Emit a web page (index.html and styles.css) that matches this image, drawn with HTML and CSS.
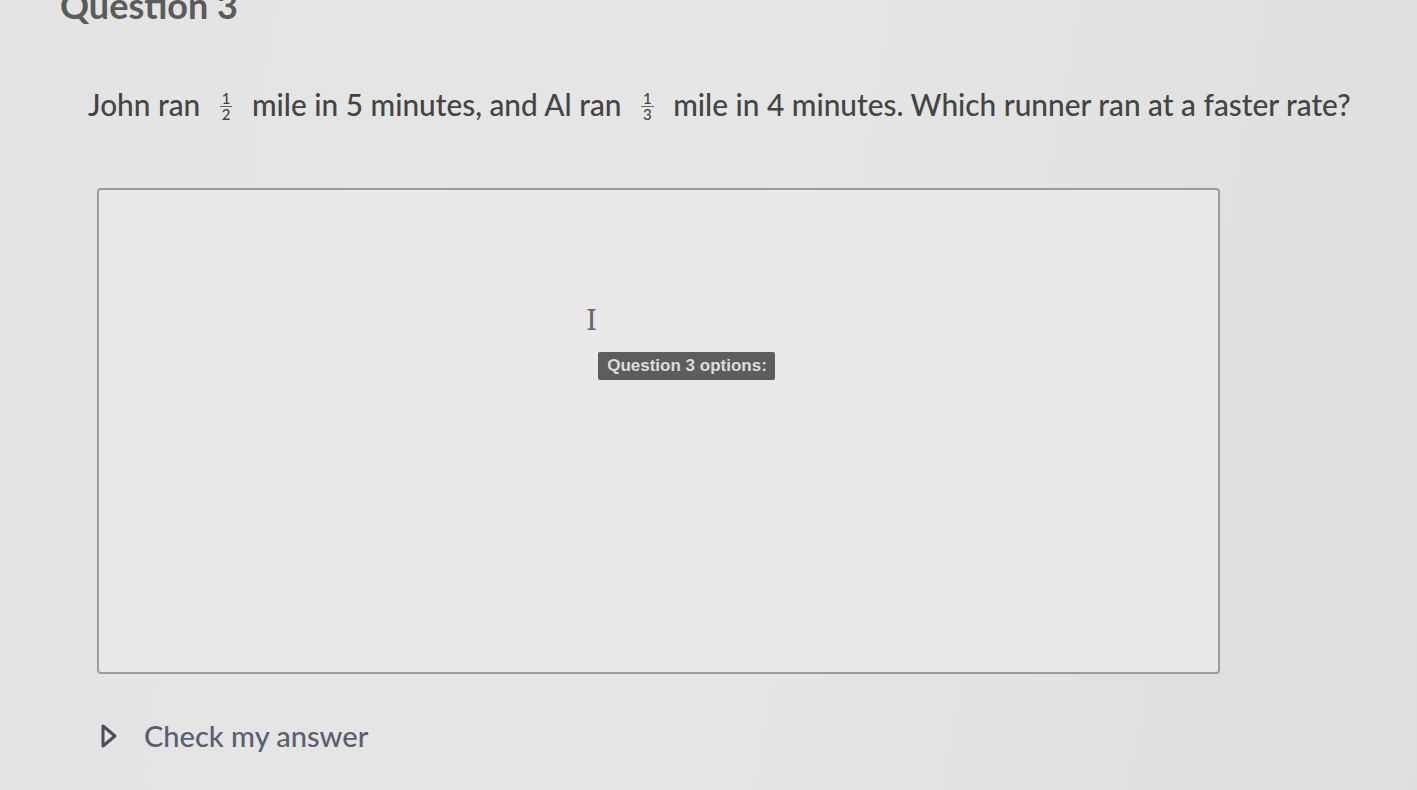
FILE: index.html
```html
<!DOCTYPE html>
<html>
<head>
<meta charset="utf-8">
<link rel="stylesheet" href="styles.css">
</head>
<body>
<div class="page">
  <h2 class="qtitle">Question 3</h2>
  <p class="qtext">John ran <span class="frac"><span class="num">1</span><span class="den">2</span></span> mile in 5 minutes, and Al ran <span class="frac"><span class="num">1</span><span class="den">3</span></span> mile in 4 minutes. Which runner ran at a faster rate?</p>
  <div class="answer-box">
    <div class="cursor">I</div>
    <div class="options-label">Question 3 options:</div>
  </div>
  <div class="check">
    <svg class="tri" width="20" height="26" viewBox="0 0 20 26"><path d="M4 3 L16 13 L4 23 Z" fill="none" stroke="#4a4e58" stroke-width="3" stroke-linejoin="round"/></svg>
    <span class="check-text">Check my answer</span>
  </div>
</div>
</body>
</html>
```
FILE: styles.css
```css
html, body {
  margin: 0;
  padding: 0;
}
body {
  width: 1417px;
  height: 790px;
  overflow: hidden;
  background: linear-gradient(100deg, #e3e3e3 0%, #e6e6e6 45%, #dedede 100%);
  font-family: Lato, "Open Sans", sans-serif;
  color: #474747;
}
.page {
  display: flex;
  flex-direction: column;
  padding-left: 88px;
}
.qtitle {
  margin: -14px 0 0 -28px;
  font-size: 36px;
  font-weight: 700;
  color: #5b5b5b;
  line-height: 38px;
}
.qtext {
  margin: 59px 0 0 0;
  font-size: 29.8px;
  line-height: 44px;
  font-weight: 500;
  color: #444;
  white-space: nowrap;
}
.frac {
  display: inline-flex;
  flex-direction: column;
  align-items: center;
  vertical-align: middle;
  font-size: 15px;
  line-height: 15px;
  margin: 0 12px 0 12px;
  position: relative;
  top: -2px;
}
.frac .num {
  border-bottom: 1px solid #666;
  padding: 0 2px;
}
.answer-box {
  margin: 61px 0 0 9px;
  width: 1123px;
  height: 486px;
  box-sizing: border-box;
  border: 2px solid #9a9c9f;
  border-radius: 4px;
  background: #e9e9e9;
  display: flex;
  flex-direction: column;
  align-items: center;
  padding-top: 116px;
}
.cursor {
  font-family: "DejaVu Serif", serif;
  font-size: 28px;
  line-height: 30px;
  color: #666;
  margin-left: -134px;
  font-weight: 300;
}
.options-label {
  margin-top: 16px;
  margin-left: 56px;
  background: #5d5d5d;
  color: #dcdcdc;
  font-family: "Liberation Sans", Arial, sans-serif;
  font-weight: 700;
  font-size: 17px;
  line-height: 28px;
  padding: 0 8px 0 9px;
  border-radius: 2px;
}
.check {
  display: flex;
  align-items: center;
  margin-top: 44px;
  margin-left: 11px;
  gap: 25px;
}
.check-text {
  font-size: 29px;
  line-height: 36px;
  color: #586070;
  font-weight: 500;
}
```
